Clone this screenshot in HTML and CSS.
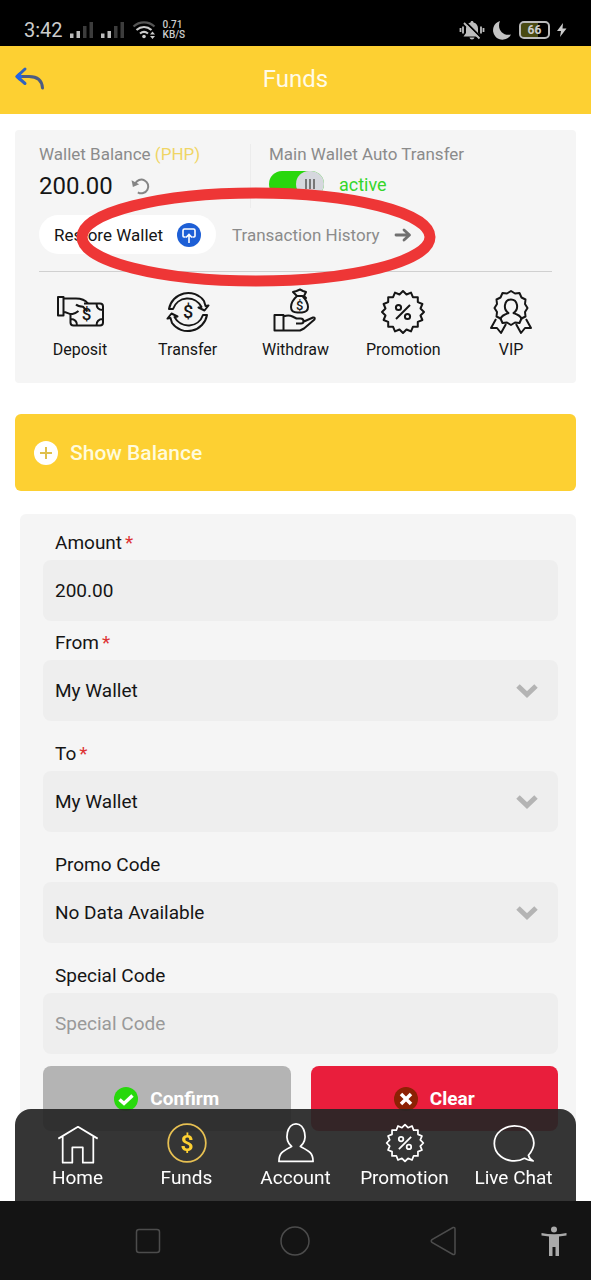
FILE: index.html
```html
<!DOCTYPE html>
<html lang="en">
<head>
<meta charset="utf-8">
<meta name="viewport" content="width=device-width, initial-scale=1">
<title>Funds</title>
<link rel="stylesheet" href="styles.css">
</head>
<body>
<svg class="defs" aria-hidden="true">
  <symbol id="promo" viewBox="0 0 48 48">
    <path d="M24 3 27.5 6.5 32 4.6 33.9 9.2 38.8 9.2 38.8 14.1 43.4 16 41.5 20.5 45 24 41.5 27.5 43.4 32 38.8 33.9 38.8 38.8 33.9 38.8 32 43.4 27.5 41.5 24 45 20.5 41.5 16 43.4 14.1 38.8 9.2 38.8 9.2 33.9 4.6 32 6.5 27.5 3 24 6.5 20.5 4.6 16 9.2 14.1 9.2 9.2 14.1 9.2 16 4.6 20.5 6.5Z"/>
    <path d="M31 17 17 31"/><circle cx="19.500" cy="19.500" r="2.600"/><circle cx="28.500" cy="28.500" r="2.600"/>
  </symbol>
  <symbol id="bars" viewBox="0 0 24 18">
    <path fill="#bbb" d="M0 12.500h3.500V17H0zM6.500 10H10v7H6.500z"/><path fill="#3c3c3c" d="M13 5h3.500v12H13zM19.500 1H23v16h-3.500z"/>
  </symbol>
</svg>

<div class="status">
  <div class="status-side">
    <span class="clock">3:42</span>
    <svg class="signal"><use href="#bars"/></svg>
    <svg class="signal"><use href="#bars"/></svg>
    <svg class="wifi" viewBox="0 0 24 20" fill="none" stroke="#ccc" stroke-width="2.200">
      <path stroke="#555" d="M1.500 6.500C7.500 1 16.500 1 22.500 6.500"/><path d="M4.500 10c4.500-4 10.500-4 15 0"/><path d="M8 13.500c2.500-2 5.500-2 8 0"/>
      <circle cx="12" cy="16.500" r="1.800" fill="#ccc" stroke="none"/><path fill="#ccc" stroke="none" d="m20.500 11.500 2.500 3h-5zM20.500 19l2.500-3h-5z"/>
    </svg>
    <span class="speed">0.71<br>KB/S</span>
  </div>
  <div class="status-side">
    <svg class="bell" viewBox="0 0 26 22" fill="#bdbdbd">
      <path d="M13 2c1 0 1.500.7 1.500 1.500 3 .8 4.500 3 4.500 6V14l2.500 3.500h-17L7 14V9.500c0-3 1.500-5.200 4.500-6C11.500 2.700 12 2 13 2zM10.500 18.500h5c-.5 2.500-4.500 2.500-5 0z"/>
      <path stroke="#000" stroke-width="2" d="M6.500 3 21.500 18"/><path stroke="#bdbdbd" stroke-width="1.800" d="M5 4 20.500 19.500M1.500 9v4M4 7.500v7M22 7.500v7M24.500 9v4"/>
    </svg>
    <svg class="moon" viewBox="0 0 20 20"><path fill="#c4c4c4" d="M8 1A9.500 9.500 0 1 0 19 14.500C11 16.500 4.500 9 8 1z"/></svg>
    <span class="battery">66</span>
    <svg class="bolt" viewBox="0 0 10 14"><path fill="#ccc" d="M6 0 0 8h4L3 14l6.500-8.500H5.500z"/></svg>
  </div>
</div>

<header class="header">
  <button class="back" aria-label="Back">
    <svg viewBox="0 0 30 24" fill="none" stroke="#315fbd" stroke-width="3" stroke-linecap="round" stroke-linejoin="round"><path stroke="#4c5c82" d="M4 9.500h10c8 0 13 4 13.500 11.500"/><path stroke="#3263bd" d="M10 2 2 9.500l8 7"/><path stroke="#2065e8" d="M4.500 7 2 9.500l2.500 2.500M2 9.500h4"/></svg>
  </button>
  <h1>Funds</h1>
</header>

<main class="content">
  <section class="wallet">
    <div class="summary">
      <div class="balance">
        <p class="caption">Wallet Balance <span class="currency">(PHP)</span></p>
        <div class="amount">200.00
          <button class="refresh" aria-label="Refresh balance"><svg viewBox="0 0 22 20" fill="none" stroke="#858585" stroke-width="2.200"><path d="M4.500 7.500A7.600 7.600 0 1 1 7.500 17"/><path fill="#858585" stroke="none" d="M.5 3.500 2 11l7-3z"/></svg></button>
        </div>
      </div>
      <div class="auto">
        <p class="caption">Main Wallet Auto Transfer</p>
        <label class="toggle"><input type="checkbox" checked><span>active</span></label>
      </div>
    </div>
    <div class="links">
      <button class="restore">Restore Wallet
        <svg viewBox="0 0 24 24"><circle cx="12" cy="12" r="12" fill="#1d5fd6"/><path fill="none" stroke="#fff" stroke-width="1.600" d="M8.500 14H7q-1 0-1-1V7.500q0-1.500 1.500-1.500h9Q18 6 18 7.500V13q0 1-1 1h-1.500M12 20v-8.500M9 14.500l3-3 3 3"/></svg>
      </button>
      <a class="history" href="#history">Transaction History
        <svg viewBox="0 0 18 16" fill="none" stroke="#707070" stroke-width="2.800" stroke-linecap="round" stroke-linejoin="round"><path d="M2 8h13M10 3l5.500 5-5.500 5"/></svg>
      </a>
    </div>
    <nav class="actions">
      <a href="#deposit">
        <svg viewBox="0 0 48 48"><path d="M2 9h5.500v18.500H2zM7.500 10.500H20c6 0 10 2.500 12 5M7.500 24c4 0 5 2.500 9 2q3-.5 6-3"/><path d="M20 16.500q2 2 7 2.200l4.500 4.800"/><path d="M28 15.500h16q3 0 3 3v16q0 3-3 3H17.500q-3 0-3-3V26M40.500 15.500q0 6.500 6.500 6.500M47 31q-6.500 0-6.500 6.500M14.500 31q6.500 0 6.500 6.500"/><text x="30.500" y="32" font-size="17">$</text></svg>
        Deposit</a>
      <a href="#transfer">
        <svg viewBox="0 0 48 48"><path d="M5 21A19.500 19.500 0 0 1 40 13L41.500 18l3-.5-4 5-6-3 3-.5A15.500 15.500 0 0 0 9 21zM43 27A19.500 19.500 0 0 1 8 35L6.500 30l-3 .5 4-5 6 3-3 .5A15.500 15.500 0 0 0 39 27z"/><text x="24" y="30" font-size="18">$</text></svg>
        Transfer</a>
      <a href="#withdraw">
        <svg viewBox="0 0 48 48"><path d="M3.500 27h9v15.500h-9zM12.500 28.500q5-2 9 0l4 2h4q3 0 3 2.500t-2.500 2.500h-5M33 33.500l9-4q2.500-.5 1.500 2L33 40.500l-4 2H12.500"/><path d="M26 8h5.500q5.500 6 5.500 11t-6 5.500h-4.500q-6.500 0-6.500-5.500t6-11zM26 8l-4-4 3.500-1L29 1.500l3 1.500 3 1-2 4 2 2-3.500-2"/><text x="28.700" y="21.500" font-size="13">$</text></svg>
        Withdraw</a>
      <a href="#promotion"><svg><use href="#promo"/></svg>Promotion</a>
      <a href="#vip">
        <svg viewBox="0 0 48 48"><path d="m24 3 4 2.500 4.500-.5 2 4.500 4 2-.5 4.500 2.500 4-2.500 4 .5 4.500-4 2-2 4.500-4.500-.5-4 2.500-4-2.500-4.500.5-2-4.500-4-2 .5-4.500-2.500-4 2.500-4-.5-4.500 4-2 2-4.500 4.500.5z"/><path d="M13.500 31.500c.5-4 4-5 8-6.500-6-4-4-13.500 2.500-13.500S32.500 21 26.500 25c4 1.500 7.500 2.500 8 6.500M9 31 4 40l6 0 4 5 5-9M39 31l5 9-6 0-4 5-5-9"/></svg>
        VIP</a>
    </nav>
    <svg class="ring" viewBox="0 0 362 100" aria-hidden="true"><ellipse cx="181" cy="50" rx="174" ry="44"/></svg>
  </section>

  <button class="show-balance">
    <svg viewBox="0 0 24 24"><circle cx="12" cy="12" r="12" fill="#fff"/><path stroke="#dfc04c" stroke-width="2" d="M6 12h12M12 6v12"/></svg>
    Show Balance
  </button>

  <form class="form">
    <div class="field tight">
      <label for="amount">Amount<i>*</i></label>
      <input id="amount" type="text" value="200.00">
    </div>
    <div class="field">
      <label for="from">From<i>*</i></label>
      <div class="select"><select id="from"><option>My Wallet</option></select><svg viewBox="0 0 22 15"><path d="m2 3 9 8.500L20 3"/></svg></div>
    </div>
    <div class="field">
      <label for="to">To<i>*</i></label>
      <div class="select"><select id="to"><option>My Wallet</option></select><svg viewBox="0 0 22 15"><path d="m2 3 9 8.500L20 3"/></svg></div>
    </div>
    <div class="field">
      <label for="promo-code">Promo Code</label>
      <div class="select"><select id="promo-code"><option>No Data Available</option></select><svg viewBox="0 0 22 15"><path d="m2 3 9 8.500L20 3"/></svg></div>
    </div>
    <div class="field last">
      <label for="special">Special Code</label>
      <input id="special" type="text" placeholder="Special Code">
    </div>
    <div class="buttons">
      <button type="submit" class="confirm"><svg viewBox="0 0 24 24"><circle cx="12" cy="12" r="12" fill="#28d80c"/><path fill="none" stroke="#fff" stroke-width="3.500" d="m5.500 12.500 4.500 4 8.500-8"/></svg>Confirm</button>
      <button type="reset" class="clear"><svg viewBox="0 0 24 24"><circle cx="12" cy="12" r="12" fill="#8c2104"/><path stroke="#fff" stroke-width="3.500" d="m7 7 10 10m0-10-10 10"/></svg>Clear</button>
    </div>
  </form>
</main>

<div class="dock">
  <nav class="tabs">
    <a href="#home"><svg viewBox="0 0 48 48"><path d="M1.500 19 24 5.500 46.500 19M6.500 16.500V46.500H17.500V29h12v17.500h12V16.500"/></svg>Home</a>
    <a href="#funds" class="current"><svg viewBox="0 0 48 48"><circle cx="24" cy="24" r="21.500"/><text x="24" y="33" font-size="26">$</text></svg>Funds</a>
    <a href="#account"><svg viewBox="0 0 48 48"><path d="M4.500 45c0-10 5-12 14.500-17C9.500 20 14 2 24 2s14.500 18 5 26c9.500 5 14.500 7 14.500 17z"/></svg>Account</a>
    <a href="#promotion"><svg><use href="#promo"/></svg>Promotion</a>
    <a href="#chat"><svg viewBox="0 0 48 48"><path d="M40.500 38C54 23 43 4.500 24.500 4.500 13 4.500 1.500 12 1.500 24.500S13 44.500 24.500 44.500c5 0 8-1 11.500-3q4 2.500 10 3-4.500-2-5.500-6.500z"/></svg>Live Chat</a>
  </nav>
  <div class="system">
    <button aria-label="Recent apps"><svg viewBox="0 0 32 32"><rect x="4.500" y="4.500" width="23" height="23" rx="2.500"/></svg></button>
    <button aria-label="Home"><svg viewBox="0 0 32 32"><circle cx="16" cy="16" r="14"/></svg></button>
    <button aria-label="Back"><svg viewBox="0 0 32 32"><path d="M26 2.500Q28 2 28 4v24q0 2-2 1.500L5 17.500Q3.500 16 5 14.500z"/></svg></button>
    <button class="access" aria-label="Accessibility"><svg viewBox="0 0 32 32"><circle cx="16" cy="4.500" r="3"/><path d="M3.500 8q12.500 2.500 25 0v2.500l-7.500 1V31h-3.500v-9h-3v9H11V11.500l-7.500-1z"/></svg></button>
  </div>
</div>
</body>
</html>
```

FILE: styles.css
```css
* { box-sizing: border-box; }
body { margin: 0; background: #fff; color: #151515; font-family: Roboto, "Liberation Sans", sans-serif; }
button { border: 0; padding: 0; background: none; font: inherit; color: inherit; }
a { color: inherit; text-decoration: none; }
h1, p { margin: 0; }
svg { flex: none; overflow: visible; }
.defs { display: none; }

.status { display: flex; justify-content: space-between; align-items: center; height: 46px; padding: 14px 24px 0; background: #000; color: #ccc; }
.status-side { display: flex; align-items: center; gap: 7px; }
.clock { font-size: 20px; }
.signal { width: 24px; height: 18px; }
.wifi { width: 24px; height: 20px; }
.speed { font-size: 10px; line-height: 10px; font-weight: 500; }
.bell { width: 26px; height: 22px; }
.moon { width: 20px; height: 20px; }
.battery { width: 31px; height: 18px; border: 2px solid #bbb; border-radius: 5px; background: linear-gradient(90deg, #494a12 62%, #000 62%); background-clip: padding-box; font-size: 12px; line-height: 14px; font-weight: 700; text-align: center; }
.bolt { width: 10px; height: 14px; }

.header { display: grid; grid-template-columns: 60px 1fr 60px; align-items: center; height: 68px; padding-bottom: 2px; background: #fdd032; }
.header h1 { text-align: center; color: #fffbe8; font-size: 24px; font-weight: 400; }
.back { display: flex; padding-left: 15px; }
.back svg { width: 30px; height: 24px; }

.content { padding: 16px 15px 120px; }
.wallet { position: relative; padding: 14px 11px 22px; background: #f5f5f5; border-radius: 4px; }
.summary { display: flex; padding: 0 13px; }
.balance { width: 212px; border-right: 1px solid #ececec; }
.auto { padding-left: 18px; }
.caption { color: #8b8b8b; font-size: 17px; line-height: 20px; }
.currency { color: #f0d565; }
.amount { display: flex; align-items: center; gap: 18px; height: 44px; font-size: 24px; }
.refresh { display: flex; }
.refresh svg { width: 20px; height: 18px; }
.toggle { display: flex; align-items: center; gap: 15px; height: 40px; color: #36d52b; font-size: 18px; }
.toggle input { appearance: none; width: 55px; height: 26px; margin: 0; border-radius: 13px; background: #29d70d; display: flex; justify-content: flex-end; }
.toggle input::before { content: ""; width: 28px; height: 26px; border-radius: 13px; background: linear-gradient(90deg, #777 2px, transparent 2px 4px, #777 4px 6px, transparent 6px 8px, #777 8px 10px) center / 10px 10px no-repeat, #d6d8de; }
.links { display: flex; align-items: center; gap: 16px; padding: 7px 13px 18px; margin-bottom: 16px; position: relative; font-size: 17px; }
.links::after { content: ""; position: absolute; left: 13px; right: 13px; bottom: 0; height: 1px; background: #d0d0d0; }
.restore { display: flex; align-items: center; justify-content: space-between; width: 177px; height: 39px; padding: 0 15px; border-radius: 20px; background: #fff; }
.restore svg { width: 24px; height: 24px; }
.history { display: flex; align-items: center; gap: 14px; color: #8b8b8b; }
.history svg { width: 18px; height: 16px; }
.actions { display: grid; grid-template-columns: repeat(5, 1fr); font-size: 16px; }
.actions a, .tabs a { display: flex; flex-direction: column; align-items: center; }
.actions a { gap: 3px; line-height: 22px; }
.actions svg { width: 48px; height: 48px; fill: none; stroke: #161616; stroke-width: 2; stroke-linejoin: round; }
.actions text, .tabs text { text-anchor: middle; stroke: none; font-weight: 500; }
.actions text { fill: #161616; }
.ring { position: absolute; left: 60px; top: 57px; width: 362px; height: 100px; fill: none; stroke: #ee3636; stroke-width: 11; pointer-events: none; }

.show-balance { display: flex; align-items: center; gap: 12px; width: 100%; height: 77px; margin: 31px 0 23px; padding: 0 19px; border-radius: 6px; background: #fdd032; color: #fffbdc; font-size: 21px; font-weight: 500; }
.show-balance svg { width: 24px; height: 24px; }

.form { margin-left: 5px; padding: 12px 18px 20px 23px; border-radius: 6px; background: #f5f5f5; font-size: 19px; }
.field { margin-bottom: 16px; }
.tight { margin-bottom: 5px; }
.last { margin-bottom: 12px; }
.field label { display: block; padding-left: 12px; line-height: 34px; }
.field i { margin-left: 3px; color: #d33; font-style: normal; }
.field input, .field select { appearance: none; width: 100%; height: 61px; padding: 0 12px; border: 0; border-radius: 8px; background: #eee; color: #151515; font: inherit; }
.field input::placeholder { color: #999; opacity: 1; }
.select { display: grid; align-items: center; }
.select select, .select svg { grid-area: 1 / 1; }
.select svg { justify-self: end; width: 22px; height: 15px; margin-right: 20px; fill: none; stroke: #b4b4b4; stroke-width: 5; pointer-events: none; }
.buttons { display: grid; grid-template-columns: 1fr 1fr; gap: 20px; }
.buttons button { display: flex; align-items: center; justify-content: center; gap: 12px; height: 65px; border-radius: 8px; color: #fff; font-weight: 700; }
.buttons svg { width: 24px; height: 24px; }
.confirm { background: #b4b4b4; }
.clear { background: #e91e3c; }

.dock { position: fixed; left: 0; right: 0; bottom: 0; }
.tabs { display: grid; grid-template-columns: repeat(5, 1fr); height: 92px; margin: 0 15px; padding: 13px 8px 0; border-radius: 16px 16px 0 0; background: rgba(38, 38, 38, .93); color: #fff; font-size: 19px; }
.tabs a { gap: 2px; line-height: 24px; white-space: nowrap; }
.tabs svg { width: 42px; height: 42px; fill: none; stroke: #fff; stroke-width: 2; stroke-linejoin: round; }
.tabs .current svg { stroke: #e7c052; }
.tabs text { fill: #fdd032; font-weight: 700; }
.system { display: grid; grid-template-columns: 1fr 1fr 1fr 74px; align-items: center; height: 79px; padding-left: 74px; background: #141414; }
.system button { display: flex; justify-content: center; }
.system svg { width: 32px; height: 32px; fill: none; stroke: #4c4c4c; stroke-width: 1.500; }
.system .access svg { fill: #aaa; stroke: none; }
```
